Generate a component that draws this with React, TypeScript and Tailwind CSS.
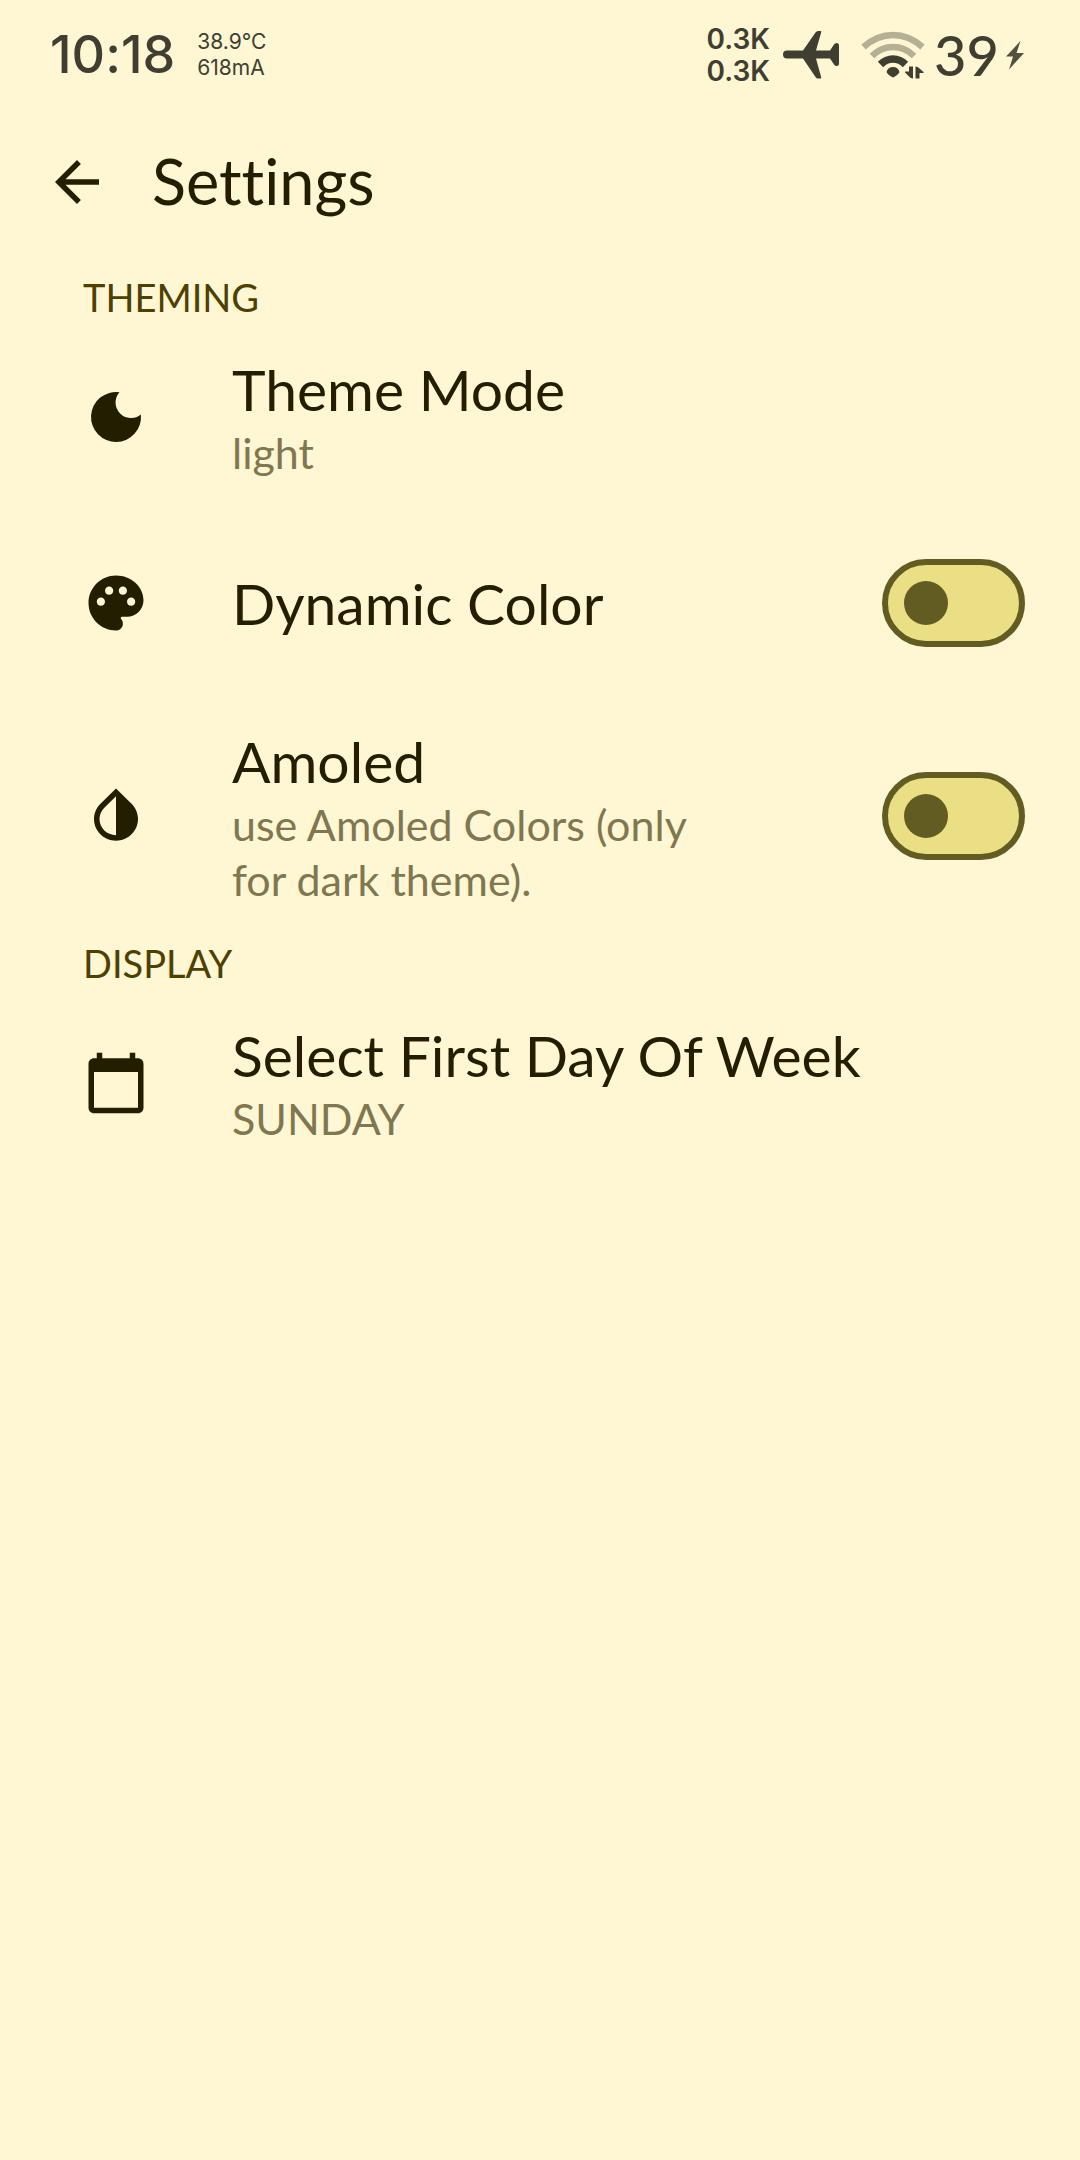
import { useId, useState, type ReactNode } from "react";

function MaterialIcon({ d }: { d: string }) {
  return (
    <svg viewBox="0 0 24 24" className="size-[66px] shrink-0" fill="currentColor" aria-hidden="true">
      <path fillRule="evenodd" d={d} />
    </svg>
  );
}

const ARROW_BACK = "M20 11H7.83l5.59-5.59L12 4l-8 8 8 8 1.41-1.41L7.83 13H20v-2z";
const PALETTE =
  "M12 2C6.49 2 2 6.49 2 12s4.49 10 10 10c1.38 0 2.5-1.12 2.5-2.5 0-.61-.23-1.2-.64-1.67-.08-.1-.13-.21-.13-.33 0-.28.22-.5.5-.5H16c3.31 0 6-2.69 6-6 0-4.96-4.49-9-10-9zM6.5 13c-.83 0-1.5-.67-1.5-1.5S5.67 10 6.5 10 8 10.67 8 11.5 7.33 13 6.5 13zm3-4C8.67 9 8 8.33 8 7.5S8.67 6 9.5 6s1.5.67 1.5 1.5S10.33 9 9.5 9zm5 0c-.83 0-1.5-.67-1.5-1.5S13.67 6 14.5 6s1.5.67 1.5 1.5S15.33 9 14.5 9zm3 4c-.83 0-1.5-.67-1.5-1.5s.67-1.5 1.5-1.5 1.5.67 1.5 1.5-.67 1.5-1.5 1.5z";
const INVERT_COLORS =
  "M12 4.81V19c-3.31 0-6-2.63-6-5.87 0-1.56.62-3.03 1.75-4.14L12 4.81M6.35 7.56C4.9 8.99 4 10.96 4 13.13 4 17.48 7.58 21 12 21s8-3.52 8-7.87c0-2.17-.9-4.14-2.35-5.57L12 2 6.35 7.56z";
const CALENDAR =
  "M20 3h-1V1h-2v2H7V1H5v2H4c-1.1 0-2 .9-2 2v16c0 1.1.9 2 2 2h16c1.1 0 2-.9 2-2V5c0-1.1-.9-2-2-2zm0 18H4V8h16v13z";

function MoonIcon() {
  return (
    <svg viewBox="0 0 66 66" className="size-[66px] shrink-0" fill="currentColor" aria-hidden="true">
      <path d="M36.5 8.2A15.5 15.5 0 0 0 57.9 30.5A25 25 0 1 1 36.5 8.2z" />
    </svg>
  );
}

function AirplaneIcon() {
  return (
    <svg viewBox="0 0 58 50" className="h-[50px] w-[58px]" fill="currentColor" aria-hidden="true">
      <path d="M5 20.5H21L33.5 2.5Q34.5 1 36 1H38.5Q39.5 1 39.2 2.2L34 20.5H48L52 14.5Q53 13 54.5 13Q57 13 57 15.5V33.5Q57 36 54.5 36Q53 36 52 34.5L48 28.5H34L39.2 47.3Q39.5 48.5 38.5 48.5H36Q34.5 48.5 33.5 47L21 28.5H5Q1 28.5 1 24.5T5 20.5z" />
    </svg>
  );
}

function WifiIcon() {
  return (
    <svg viewBox="0 0 66 50" className="h-[50px] w-[66px]" fill="none" stroke="currentColor" aria-hidden="true">
      <g strokeWidth="6.5" opacity="0.38">
        <path d="M3.5 17Q17 5 33 5T62.5 17" />
        <path d="M12 26Q21 17 33 17T54 26" />
      </g>
      <path strokeWidth="7.5" d="M20.5 34.5Q26 29 33 29T45.5 34.5" />
      <g fill="currentColor" stroke="none">
        <path d="M26.5 42Q28 37 33 37T39.5 42Q38 45 33 47.5Q28 45 26.5 42z" />
        <path d="M49 36.5H53V48.5Q50.5 48.5 49 46.5L45 42.5V41.5H49z" />
        <path d="M55.5 36.5Q58 36.5 59.5 38.5L63.5 42V43H59.5V48.5H55.5z" />
      </g>
    </svg>
  );
}

function BoltIcon() {
  return (
    <svg viewBox="0 0 20 30" className="h-[30px] w-5" fill="currentColor" aria-hidden="true">
      <path d="M15.5 1L1 16.5H8L4 29.5L19 13H11.5z" opacity="0.9" />
    </svg>
  );
}

function StatusBar() {
  return (
    <header className="flex h-[109px] items-center justify-between pr-[55px] pl-[50px] font-['Inter',sans-serif] text-[#403e30]">
      <div className="flex items-center gap-[22px]">
        <time className="text-[52px] leading-none font-medium">10:18</time>
        <div className="text-[21px] leading-[26px]">
          <p>38.9°C</p>
          <p>618mA</p>
        </div>
      </div>
      <div className="flex items-center">
        <div className="mr-3 text-[28px] leading-8 font-semibold">
          <p>0.3K</p>
          <p>0.3K</p>
        </div>
        <div className="mr-5">
          <AirplaneIcon />
        </div>
        <div className="mr-2">
          <WifiIcon />
        </div>
        <span className="mr-1.5 font-['Lato',sans-serif] text-[56px] leading-none font-medium">39</span>
        <BoltIcon />
      </div>
    </header>
  );
}

function SectionTitle({ children }: { children: ReactNode }) {
  return <h2 className="pl-[83px] text-[38px] leading-[56px] text-[#4d4000]">{children}</h2>;
}

function RowText({ title, detail }: { title: string; detail?: string }) {
  return (
    <span className="block flex-1">
      <span className="block text-[57px] leading-[72px]">{title}</span>
      {detail && <span className="block text-[43px] leading-[55px] text-[#807750]">{detail}</span>}
    </span>
  );
}

function LinkRow({ icon, title, detail }: { icon: ReactNode; title: string; detail: string }) {
  return (
    <button type="button" className="flex w-full items-center gap-[83px] py-7 pr-[55px] pl-[83px] text-left">
      {icon}
      <RowText title={title} detail={detail} />
    </button>
  );
}

function SwitchRow({ icon, title, detail }: { icon: ReactNode; title: string; detail?: string }) {
  const id = useId();
  const [on, setOn] = useState(false);
  return (
    <label htmlFor={id} className="flex min-h-[189px] items-center gap-[83px] py-7 pr-[55px] pl-[83px]">
      {icon}
      <RowText title={title} detail={detail} />
      <span className="ml-[77px] flex">
        <input
          id={id}
          type="checkbox"
          role="switch"
          checked={on}
          onChange={(e) => setOn(e.target.checked)}
          className="flex h-[88px] w-[143px] appearance-none items-center rounded-full border-6 border-[#635c22] bg-[#ebdf85] px-4 before:size-11 before:rounded-full before:bg-[#635c22] checked:justify-end"
        />
      </span>
    </label>
  );
}

export default function App() {
  return (
    <div className="min-h-screen bg-[#fff6d3] font-['Lato',sans-serif] text-[#241e00] [font-variant-ligatures:none]">
      <StatusBar />
      <div className="flex h-40 items-start gap-[42px] pt-9 pl-11">
        <button type="button" aria-label="Back" className="mt-1">
          <MaterialIcon d={ARROW_BACK} />
        </button>
        <h1 className="text-[63px] leading-[72px]">Settings</h1>
      </div>
      <main>
        <section>
          <SectionTitle>THEMING</SectionTitle>
          <LinkRow icon={<MoonIcon />} title="Theme Mode" detail="light" />
          <SwitchRow icon={<MaterialIcon d={PALETTE} />} title="Dynamic Color" />
          <SwitchRow
            icon={<MaterialIcon d={INVERT_COLORS} />}
            title="Amoled"
            detail="use Amoled Colors (only for dark theme)."
          />
        </section>
        <section>
          <SectionTitle>DISPLAY</SectionTitle>
          <LinkRow icon={<MaterialIcon d={CALENDAR} />} title="Select First Day Of Week" detail="SUNDAY" />
        </section>
      </main>
    </div>
  );
}
